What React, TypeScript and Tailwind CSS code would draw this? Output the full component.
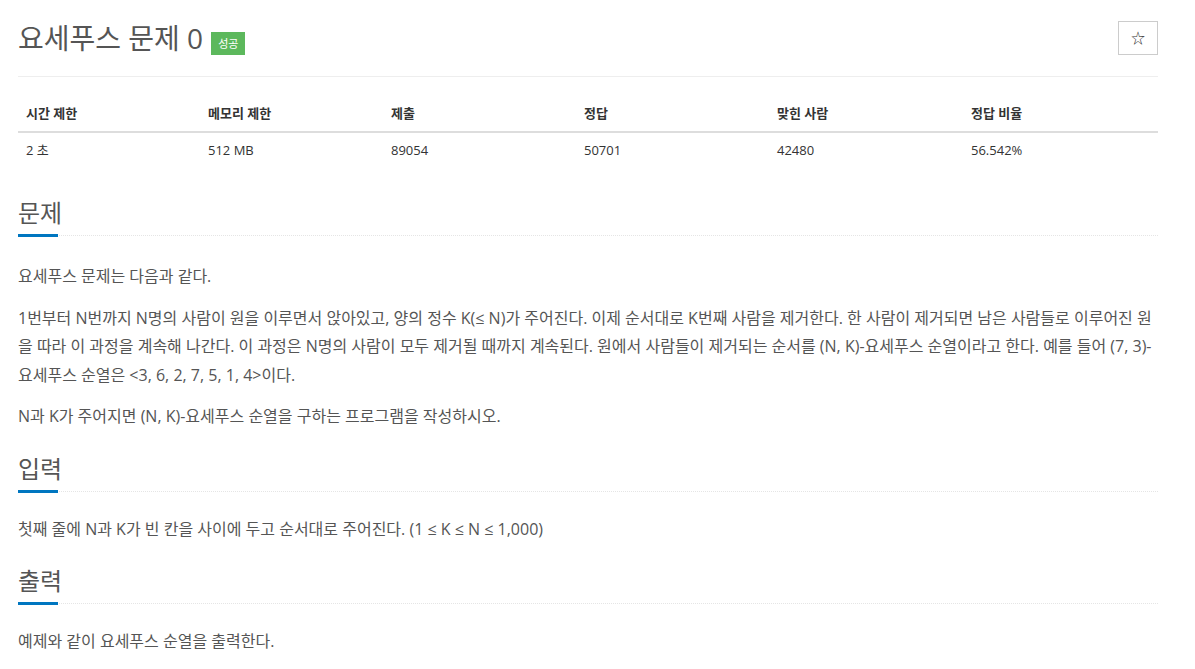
const FONT = { fontFamily: '"Open Sans", "Noto Sans CJK KR", sans-serif' };

const STATS = [
  { label: "시간 제한", value: "2 초" },
  { label: "메모리 제한", value: "512 MB" },
  { label: "제출", value: "89054" },
  { label: "정답", value: "50701" },
  { label: "맞힌 사람", value: "42480" },
  { label: "정답 비율", value: "56.542%" },
];

function SectionTitle({ children, top }: { children: string; top: string }) {
  return (
    <div className={top}>
      <h2 className="text-[24px] leading-[34px] text-[#555]">{children}</h2>
      <div className="relative mt-[4px] h-[3px]">
        <div className="absolute left-0 right-0 top-[1px] border-t border-dotted border-[#e5e5e5]" />
        <div className="absolute left-0 top-0 h-[3px] w-[40px] bg-[#0076c0]" />
      </div>
    </div>
  );
}

export default function App() {
  return (
    <div style={FONT} className="min-h-[669px] bg-white text-[#555]">
      <div className="w-[1140px] ml-[18px] pt-[20px]">
        <div className="flex items-start justify-between border-b border-[#eee] pb-[20px]">
          <div className="flex items-center gap-[8px]">
            <h1 className="text-[28px] leading-[36px] text-[#555]">요세푸스 문제 0</h1>
            <span className="mt-[10px] bg-[#5cb85c] px-[7px] py-[3px] text-[11px] leading-[17px] text-white">성공</span>
          </div>
          <button className="mt-[1px] flex h-[34px] w-[40px] items-center justify-center border border-[#ccc] pb-[2px] text-[14px] text-[#333]">
            ☆
          </button>
        </div>

        <div className="mt-[19px] grid grid-cols-[182px_183px_193px_193px_194px_195px] text-[13px]">
          {STATS.map((s) => (
            <div key={s.label} className="border-b-2 border-[#ddd] py-[8px] pl-[8px] font-bold leading-[19px] text-[#333]">
              {s.label}
            </div>
          ))}
          {STATS.map((s) => (
            <div key={s.label + "v"} className="py-[8px] pl-[8px] leading-[19px] text-[#333]">
              {s.value}
            </div>
          ))}
        </div>

        <SectionTitle top="mt-[28px]">문제</SectionTitle>
        <div className="mt-[25px] text-[16px] leading-[28.5px] text-[#555]">
          <p>요세푸스 문제는 다음과 같다.</p>
          <p className="mt-[13px]">
            1번부터 N번까지 N명의 사람이 원을 이루면서 앉아있고, 양의 정수 K(≤ N)가 주어진다. 이제 순서대로 K번째 사람을 제거한다. 한 사람이 제거되면 남은 사람들로 이루어진 원을 따라 이 과정을 계속해 나간다. 이 과정은 N명의 사람이 모두 제거될 때까지 계속된다. 원에서 사람들이 제거되는 순서를 (N, K)-요세푸스 순열이라고 한다. 예를 들어 (7, 3)-요세푸스 순열은 &lt;3, 6, 2, 7, 5, 1, 4&gt;이다.
          </p>
          <p className="mt-[13px]">N과 K가 주어지면 (N, K)-요세푸스 순열을 구하는 프로그램을 작성하시오.</p>
        </div>

        <SectionTitle top="mt-[21px]">입력</SectionTitle>
        <div className="mt-[22px] text-[16px] leading-[28.5px]">
          <p>첫째 줄에 N과 K가 빈 칸을 사이에 두고 순서대로 주어진다. (1 ≤ K ≤ N ≤ 1,000)</p>
        </div>

        <SectionTitle top="mt-[21px]">출력</SectionTitle>
        <div className="mt-[22px] text-[16px] leading-[28.5px]">
          <p>예제와 같이 요세푸스 순열을 출력한다.</p>
        </div>
      </div>
    </div>
  );
}
